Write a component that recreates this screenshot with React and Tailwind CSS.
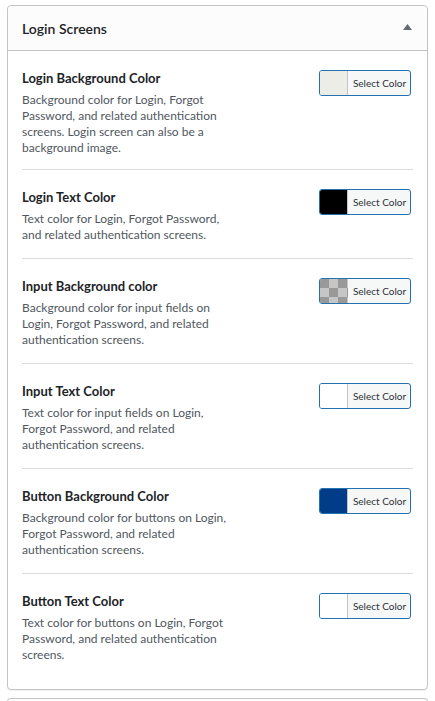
import React from "react";

const items = [
  {
    title: "Login Background Color",
    lines: [
      "Background color for Login, Forgot",
      "Password, and related authentication",
      "screens. Login screen can also be a",
      "background image.",
    ],
    swatch: "bg-[#ecede6]",
  },
  {
    title: "Login Text Color",
    lines: ["Text color for Login, Forgot Password,", "and related authentication screens."],
    swatch: "bg-[#000000]",
  },
  {
    title: "Input Background color",
    lines: [
      "Background color for input fields on",
      "Login, Forgot Password, and related",
      "authentication screens.",
    ],
    checker: true,
  },
  {
    title: "Input Text Color",
    lines: [
      "Text color for input fields on Login,",
      "Forgot Password, and related",
      "authentication screens.",
    ],
    swatch: "bg-white",
  },
  {
    title: "Button Background Color",
    lines: [
      "Background color for buttons on Login,",
      "Forgot Password, and related",
      "authentication screens.",
    ],
    swatch: "bg-[#003c87]",
  },
  {
    title: "Button Text Color",
    lines: [
      "Text color for buttons on Login, Forgot",
      "Password, and related authentication",
      "screens.",
    ],
    swatch: "bg-white",
  },
];

function Checker() {
  return (
    <svg width="28" height="24" viewBox="0 0 28 24" className="block">
      <defs>
        <pattern id="chk" width="18" height="18" patternUnits="userSpaceOnUse">
          <rect width="18" height="18" fill="#c6c6c6" />
          <rect width="9" height="9" fill="#999999" />
          <rect x="9" y="9" width="9" height="9" fill="#999999" />
        </pattern>
      </defs>
      <rect width="28" height="24" fill="url(#chk)" />
    </svg>
  );
}

function ColorButton({ swatch, checker }) {
  return (
    <div className="flex h-[26px] w-[92px] shrink-0 overflow-hidden rounded-[3px] border border-[#2271b1] bg-[#f6f7f7]">
      <div className={`h-full w-[28px] border-r border-[#c3c4c7] ${checker ? "" : swatch}`}>
        {checker && <Checker />}
      </div>
      <div className="flex flex-1 items-center justify-center pl-[1px] text-[10px] text-[#2c3338]">
        Select Color
      </div>
    </div>
  );
}

export default function App() {
  return (
    <div
      className="min-h-[701px] bg-white px-[7px] pt-[5px]"
      style={{ fontFamily: 'Lato, "Noto Sans", sans-serif' }}
    >
      <div className="rounded-[4px] border border-[#c3c4c7] bg-white shadow-[0_1px_1px_rgba(0,0,0,0.06)]">
        <div className="flex h-[45px] items-center justify-between rounded-t-[4px] border-b border-[#c3c4c7] bg-[#fcfcfc] pl-[14px] pr-[15px]">
          <h2 className="text-[14px] font-semibold text-[#1d2327]">Login Screens</h2>
          <svg width="9" height="6" viewBox="0 0 9 6" className="mb-[3px]">
            <path d="M4.5 0 L9 6 L0 6 Z" fill="#646970" />
          </svg>
        </div>
        <div className="px-[14px] pb-[11px]">
          {items.map((it, i) => (
            <div
              key={i}
              className={`flex justify-between pt-[18px] ${i === 0 ? "pb-[13px]" : "pb-[15px]"} ${
                i < items.length - 1 ? "border-b border-[#dcdcde]" : ""
              }`}
            >
              <div>
                <div className="text-[13px] font-bold leading-[18px] text-[#1d2327]">
                  {it.title}
                </div>
                <p className="mt-[5px] whitespace-nowrap text-[12px] leading-[16px] text-[#50575e]">
                  {it.lines.map((l, j) => (
                    <React.Fragment key={j}>
                      {l}
                      {j < it.lines.length - 1 && <br />}
                    </React.Fragment>
                  ))}
                </p>
              </div>
              <div className="mt-[1px] mr-[2px]">
                <ColorButton swatch={it.swatch} checker={it.checker} />
              </div>
            </div>
          ))}
        </div>
      </div>
      <div className="mt-[8px] h-[20px] rounded-t-[4px] border border-b-0 border-[#c3c4c7]"></div>
    </div>
  );
}
